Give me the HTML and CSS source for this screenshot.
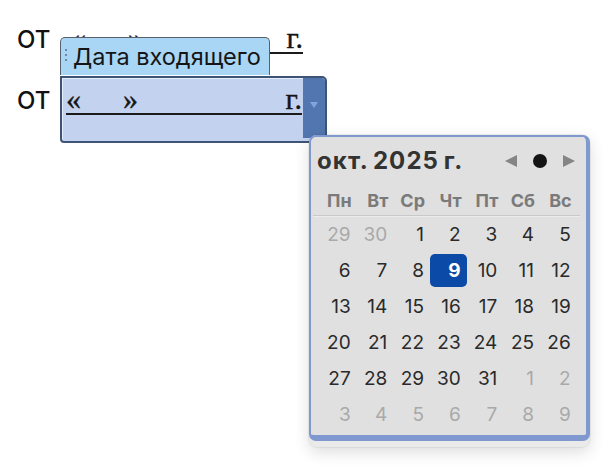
FILE: index.html
```html
<!DOCTYPE html>
<html lang="ru">
<head>
<meta charset="utf-8">
<title>Дата входящего</title>
<link rel="stylesheet" href="styles.css">
</head>
<body>
<div class="page">
  <div class="line line1">
    <span class="ot">ОТ</span>
    <span class="date date1"><span class="q">«</span><span class="q q2">»</span><span class="g">г.</span></span>
  </div>
  <div class="line line2">
    <span class="ot ot2">ОТ</span>
    <div class="control">
      <div class="tag"><span class="grip"><i></i><i></i><i></i></span>Дата входящего</div>
      <div class="field">
        <span class="date date2"><span class="q">«</span><span class="q q2">»</span><span class="g">г.</span></span>
        <span class="dd"><svg width="8" height="6" viewBox="0 0 8 6"><polygon points="0,0 8,0 4,6" fill="#7fa6e2"/></svg></span>
      </div>
    </div>
  </div>

  <div class="popup">
    <div class="cal">
      <div class="head">
        <span class="title">окт. 2025 г.</span>
        <svg class="nav" width="74" height="16" viewBox="0 0 74 16">
          <polygon points="1,8 13,2 13,14" fill="#858585"/>
          <circle cx="36" cy="8" r="7" fill="#141414"/>
          <polygon points="59,2 59,14 71,8" fill="#858585"/>
        </svg>
      </div>
      <div class="wk">
        <span>Пн</span><span>Вт</span><span>Ср</span><span>Чт</span><span>Пт</span><span>Сб</span><span>Вс</span>
      </div>
      <div class="rule"></div>
      <div class="days">
        <span class="d o">29</span><span class="d o">30</span><span class="d">1</span><span class="d">2</span><span class="d">3</span><span class="d">4</span><span class="d">5</span>
        <span class="d">6</span><span class="d">7</span><span class="d">8</span><span class="d sel">9</span><span class="d">10</span><span class="d">11</span><span class="d">12</span>
        <span class="d">13</span><span class="d">14</span><span class="d">15</span><span class="d">16</span><span class="d">17</span><span class="d">18</span><span class="d">19</span>
        <span class="d">20</span><span class="d">21</span><span class="d">22</span><span class="d">23</span><span class="d">24</span><span class="d">25</span><span class="d">26</span>
        <span class="d">27</span><span class="d">28</span><span class="d">29</span><span class="d">30</span><span class="d">31</span><span class="d o">1</span><span class="d o">2</span>
        <span class="d o">3</span><span class="d o">4</span><span class="d o">5</span><span class="d o">6</span><span class="d o">7</span><span class="d o">8</span><span class="d o">9</span>
      </div>
    </div>
  </div>
</div>
</body>
</html>
```

FILE: styles.css
```css
html, body {
  margin: 0;
  padding: 0;
  background: #ffffff;
}

.page {
  position: relative;
  width: 614px;
  height: 470px;
  box-sizing: border-box;
  padding: 24px 0 0 17px;
  overflow: hidden;
}

.line {
  display: flex;
}

.line1 {
  align-items: baseline;
}

.line2 {
  align-items: flex-start;
  margin-top: 22px;
}

.ot {
  font: 500 24px/22px Inter, "Liberation Sans", Arial, sans-serif;
  color: #111;
  width: 43px;
}

.ot2 {
  margin-top: 14px;
}

.date {
  display: flex;
  font: 30px/28px "Liberation Serif", "Times New Roman", serif;
  color: #151515;
  border-bottom: 2px solid #1b1b1b;
  box-sizing: border-box;
  -webkit-text-stroke: 0.4px #151515;
}

.date1 {
  margin-left: 6px;
  width: 237px;
  padding-left: 5px;
}

.q2 {
  margin-left: 42px;
}

.g {
  margin-left: auto;
}

.control {
  position: relative;
  width: 267px;
}

.tag {
  position: absolute;
  left: 0;
  top: -39px;
  width: 210px;
  height: 38px;
  box-sizing: border-box;
  background: #aad6f6;
  border: 1.5px solid #56616c;
  border-bottom: none;
  border-radius: 5px 5px 0 0;
  display: flex;
  align-items: center;
  font: 23.5px/24px Inter, "Liberation Sans", sans-serif;
  color: #151515;
  padding-left: 2px;
  z-index: 2;
}

.grip {
  display: flex;
  flex-direction: column;
  gap: 3px;
  width: 10px;
  margin-top: -4px;
}

.grip i {
  display: block;
  width: 2px;
  height: 2px;
  background: #6e8aa6;
  margin-left: 2px;
}

.field {
  display: flex;
  height: 67px;
  box-sizing: border-box;
  background: #c3d3ef;
  border: 2px solid #3e5474;
  border-radius: 0 5px 5px 4px;
  box-shadow: inset 1px 1px 0 #e4ecf9;
}

.date2 {
  margin: 7px 0 0 4px;
  width: 236px;
  height: 30px;
  padding-left: 0;
}

.dd {
  width: 22px;
  margin-left: 1px;
  margin-bottom: 3px;
  background: #5276b0;
  display: flex;
  justify-content: center;
  align-items: flex-start;
  padding-top: 24px;
  box-sizing: border-box;
  border-radius: 0 3px 0 0;
}

.popup {
  position: absolute;
  left: 309px;
  top: 135px;
  width: 281px;
  padding-bottom: 6px;
  background: #eaeaea;
  border-radius: 8px;
  box-shadow: 0 5px 16px rgba(0, 0, 0, 0.14), 0 0 0 1px rgba(0, 0, 0, 0.05);
  z-index: 3;
}

.cal {
  box-sizing: border-box;
  width: 281px;
  background: #e0e0e0;
  border: 2px solid #7f99d0;
  border-right-width: 4px;
  border-bottom-width: 6px;
  border-radius: 7px;
  padding: 0 9px 2px 9px;
  font-family: Inter, "Liberation Sans", sans-serif;
}

.head {
  height: 48px;
  display: flex;
  align-items: center;
  margin-left: -3px;
}

.title {
  font-size: 24px;
  line-height: 24px;
  font-weight: 700;
  color: #333;
  letter-spacing: 1.1px;
  word-spacing: -2px;
}

.nav {
  margin-left: auto;
  margin-right: -1px;
}

.wk,
.days {
  display: grid;
  grid-template-columns: repeat(7, 1fr);
  width: 256.7px;
}

.wk {
  height: 30px;
  align-items: center;
  font-size: 18px;
  font-weight: 700;
  color: #7a7a7a;
}

.wk span {
  text-align: right;
  padding-right: 5px;
}

.rule {
  height: 1px;
  background: #c9c9c9;
  margin: 0 -3px 1px -7px;
  box-shadow: 0 1px 0 #ececec;
}

.d {
  height: 36px;
  line-height: 36px;
  text-align: right;
  padding-right: 6px;
  font-size: 19px;
  color: #2a2a2a;
}

.d.o {
  color: #a9a9a9;
}

.d.sel {
  margin: 1px 0 2px 0;
  height: 33px;
  line-height: 33px;
  background: #0b4aa6;
  color: #fff;
  font-weight: 700;
  border-radius: 5px;
}
```
